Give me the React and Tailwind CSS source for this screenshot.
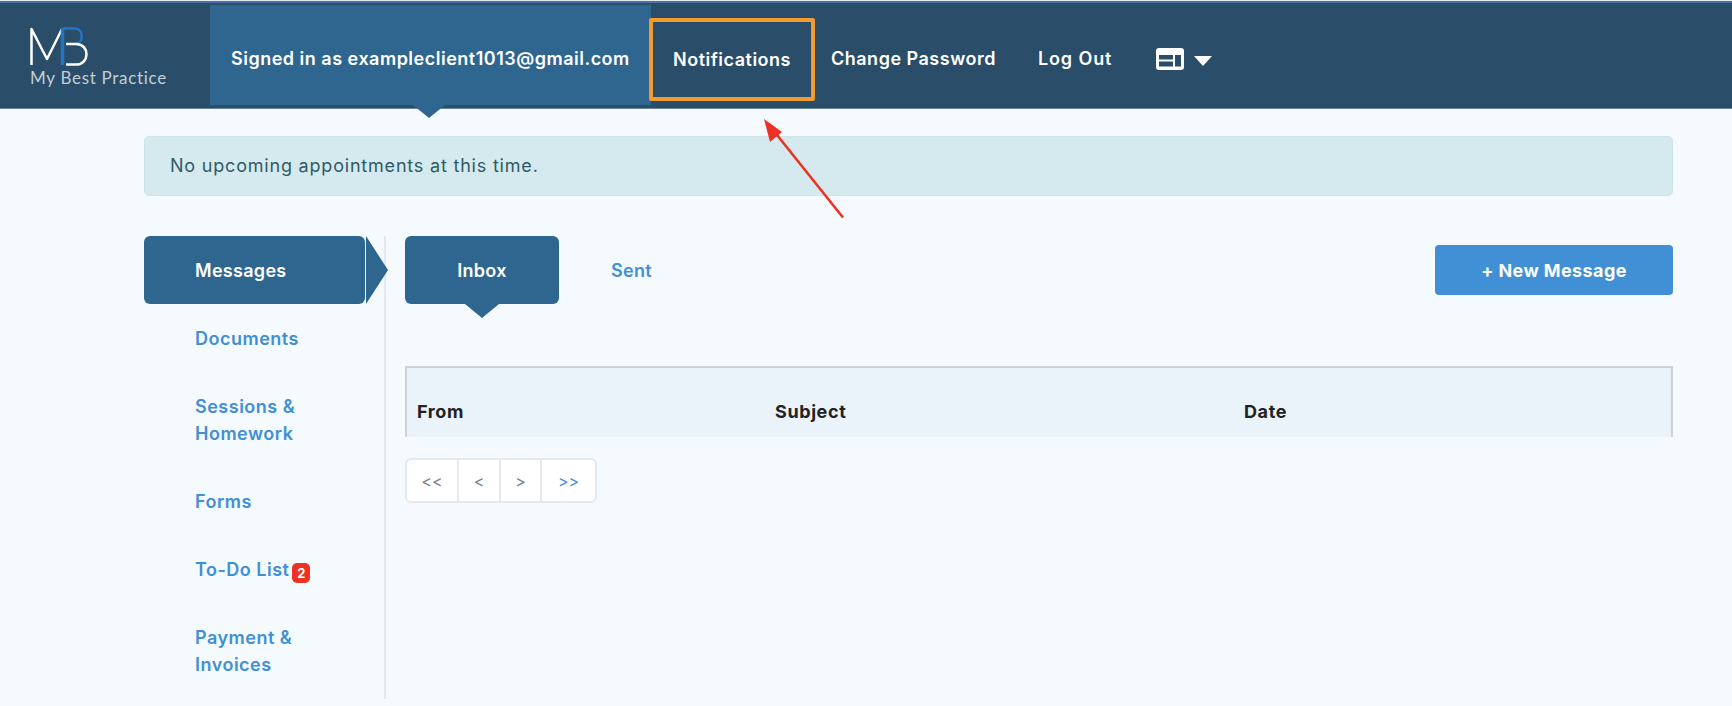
import React from "react";

const sideLinks = [
  { label: ["Documents"] },
  { label: ["Sessions &", "Homework"] },
  { label: ["Forms"] },
  { label: ["To-Do List"], badge: 2 },
  { label: ["Payment &", "Invoices"] },
];

const pageButtons = [
  { text: "<<", cls: "w-[51px] text-[#77808a]" },
  { text: "<", cls: "w-[43px] text-[#77808a] border-l-2 border-[#e4e9ee]" },
  { text: ">", cls: "w-[42px] text-[#77808a] border-l-2 border-[#e4e9ee]" },
  { text: ">>", cls: "w-[56px] text-[#418fd4] border-l-2 border-[#e4e9ee]" },
];

const Logo = () => (
  <div className="ml-[30px] mt-[23px] flex flex-col">
    <svg width="60" height="40" viewBox="0 0 60 40" fill="none">
      <path d="M1.5 39V3L17 33L32 3" stroke="#ffffff" strokeWidth="2.5" strokeLinejoin="round" />
      <path d="M32.5 2V39" stroke="#2474c4" strokeWidth="3.5" />
      <path d="M32 2.5H45C54 2.5 54 18 45 18" stroke="#2474c4" strokeWidth="2.5" />
      <path d="M36 18H46C60 18 60 38.5 46 38.5H36" stroke="#ffffff" strokeWidth="2.5" />
    </svg>
    <span className="mt-[3px] whitespace-nowrap font-['Lato',sans-serif] text-[17px] font-normal leading-[18px] tracking-[0.7px] text-[#c3ced6]">
      My Best Practice
    </span>
  </div>
);

const LayoutIcon = () => (
  <svg width="28" height="22" viewBox="0 0 28 22" className="ml-[44px]">
    <rect width="28" height="22" rx="3" fill="#ffffff" />
    <rect x="3" y="7" width="14" height="4.5" fill="#2a4d69" />
    <rect x="3" y="13.5" width="14" height="5" fill="#2a4d69" />
    <rect x="19" y="7" width="6" height="11.5" fill="#2a4d69" />
  </svg>
);

const Header = () => (
  <header className="flex h-[106px] border-b border-[#6b8398] bg-[#2a4d69] text-[18px] font-semibold tracking-[0.5px] text-white">
    <div className="w-[210px] shrink-0">
      <Logo />
    </div>

    <div className="relative mt-[2px] flex h-[100px] w-[441px] shrink-0 items-center whitespace-nowrap bg-[#2f6690] pl-[21px] pt-[7px]">
      Signed in as exampleclient1013@gmail.com
      <div className="absolute left-[203px] top-full h-0 w-0 border-x-[16px] border-t-[13px] border-x-transparent border-t-[#2f6690]" />
    </div>

    <div className="relative -ml-[2px] mt-[15px] flex h-[83px] w-[166px] shrink-0 items-center justify-center rounded-[2px] border-4 border-[#f29b30]">
      Notifications
    </div>

    <nav className="flex items-center whitespace-nowrap pt-[6px]">
      <span className="ml-[16px]">Change Password</span>
      <span className="ml-[42px] tracking-[0.9px]">Log Out</span>
      <LayoutIcon />
      <svg width="18" height="10" viewBox="0 0 18 10" className="ml-[10px] mt-[4px]">
        <polygon points="0,0 18,0 9,10" fill="#ffffff" />
      </svg>
    </nav>
  </header>
);

const Sidebar = () => (
  <aside className="w-[242px] shrink-0 border-r-2 border-[#e2eaf0] text-[18px] font-semibold leading-[27px] tracking-[0.5px]">
    <div className="relative flex h-[68px] w-[221px] items-center rounded-md bg-[#2f6690] pl-[51px] tracking-[0.3px] text-white">
      Messages
      <div className="absolute left-[222px] top-0 h-0 w-0 border-y-[34px] border-l-[22px] border-y-transparent border-l-[#2f6690]" />
    </div>
    {sideLinks.map((link) => (
      <a key={link.label[0]} className="block py-[20.5px] pl-[51px] text-[#418fd4]">
        {link.label.map((line) => (
          <span key={line} className="block whitespace-nowrap">
            {line}
            {link.badge && (
              <span className="ml-[3px] inline-flex h-[20px] w-[18px] items-center justify-center rounded-[5px] bg-[#ee3124] align-[-2px] text-[13px] font-bold leading-none tracking-normal text-white">
                {link.badge}
              </span>
            )}
          </span>
        ))}
      </a>
    ))}
  </aside>
);

const MessagesPanel = () => (
  <section className="min-w-0 flex-1 pl-[19px]">
    <div className="flex items-start text-[18px] font-semibold tracking-[0.3px]">
      <div className="relative flex h-[68px] w-[154px] items-center justify-center rounded-md bg-[#2f6690] text-white">
        Inbox
        <div className="absolute left-[60px] top-full h-0 w-0 border-x-[17px] border-t-[14px] border-x-transparent border-t-[#2f6690]" />
      </div>
      <span className="ml-[52px] flex h-[68px] items-center text-[#418fd4]">Sent</span>
      <button className="ml-auto mt-[9px] h-[50px] w-[238px] rounded-[4px] bg-[#418fd4] font-bold tracking-[0.4px] text-white">
        + New Message
      </button>
    </div>

    <div className="mt-[62px] grid h-[71px] grid-cols-[358px_469px_1fr] items-end border-x-2 border-t-2 border-[#cdd3d8] bg-[#e9f3f9] pb-[12px] pl-[10px] text-[18px] font-bold tracking-[0.6px] text-[#222222]">
      <span>From</span>
      <span>Subject</span>
      <span>Date</span>
    </div>

    <div className="mt-[21px] flex h-[45px] w-[192px] overflow-hidden rounded-md border-2 border-[#e4e9ee] bg-white text-[16px]">
      {pageButtons.map((btn) => (
        <span key={btn.text} className={`flex items-center justify-center ${btn.cls}`}>
          {btn.text}
        </span>
      ))}
    </div>
  </section>
);

export default function App() {
  return (
    <div className="relative h-[706px] overflow-hidden bg-[#f5fafe] font-['Inter',sans-serif]">
      <div className="h-[1px] bg-[#e4e9f0]" />
      <div className="h-[2px] bg-[#4a70a8]" />
      <Header />

      <main className="pl-[144px] pr-[59px] pt-[27px]">
        <div className="flex h-[60px] items-center rounded-[5px] border border-[#cde4ea] bg-[#d5eaef] pb-[2px] pl-[25px] text-[18px] tracking-[0.8px] text-[#2f5a66]">
          No upcoming appointments at this time.
        </div>

        <div className="mt-[40px] flex">
          <Sidebar />
          <MessagesPanel />
        </div>
      </main>

      {/* red annotation arrow */}
      <svg className="absolute left-[750px] top-[110px]" width="110" height="120" viewBox="0 0 110 120">
        <line x1="93" y1="107.5" x2="23" y2="20" stroke="#ee3124" strokeWidth="2.6" />
        <polygon points="14,9 32,22 20,32" fill="#ee3124" />
      </svg>
    </div>
  );
}
